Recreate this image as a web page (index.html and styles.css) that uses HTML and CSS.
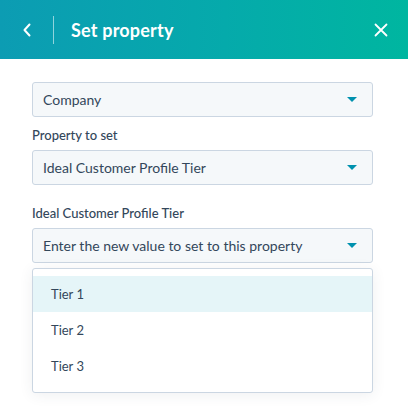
FILE: index.html
```html
<!DOCTYPE html>
<html>
<head>
<meta charset="utf-8">
<link rel="stylesheet" href="styles.css">
</head>
<body>
<div class="panel">
  <header class="header">
    <button class="back" aria-label="Back">
      <svg width="10" height="14" viewBox="0 0 10 14"><path d="M7.5 1.5 L2.5 7 L7.5 12.5" fill="none" stroke="#fff" stroke-width="2" stroke-linecap="round" stroke-linejoin="round"/></svg>
    </button>
    <span class="divider"></span>
    <h1 class="title">Set property</h1>
    <button class="close" aria-label="Close">
      <svg width="14" height="14" viewBox="0 0 14 14"><path d="M1.5 1.5 L12.5 12.5 M12.5 1.5 L1.5 12.5" fill="none" stroke="#fff" stroke-width="1.8" stroke-linecap="round"/></svg>
    </button>
  </header>
  <main class="body">
    <div class="select"><span>Company</span><span class="caret"></span></div>
    <label class="label">Property to set</label>
    <div class="select"><span>Ideal Customer Profile Tier</span><span class="caret"></span></div>
    <label class="label label-gap">Ideal Customer Profile Tier</label>
    <div class="field">
      <div class="select"><span>Enter the new value to set to this property</span><span class="caret"></span></div>
      <ul class="menu">
        <li class="option active">Tier 1</li>
        <li class="option">Tier 2</li>
        <li class="option">Tier 3</li>
      </ul>
    </div>
  </main>
</div>
</body>
</html>
```
FILE: styles.css
```css
* { box-sizing: border-box; }
html, body { margin: 0; padding: 0; }
body {
  width: 408px;
  height: 420px;
  background: #fff;
  font-family: Lato, "Open Sans", sans-serif;
  color: #33475b;
  overflow: hidden;
}
.header {
  height: 59px;
  display: flex;
  align-items: center;
  padding: 0 18px 0 20px;
  background: linear-gradient(to right, #0c9cb3 0%, #05aaab 55%, #00b6a0 100%);
}
.back, .close {
  border: 0;
  background: none;
  padding: 0;
  display: flex;
  align-items: center;
  justify-content: center;
  cursor: pointer;
}
.back { width: 14px; height: 20px; }
.divider {
  width: 1px;
  height: 28px;
  background: rgba(255, 255, 255, 0.55);
  margin: 0 17px 0 19px;
}
.title {
  margin: 0;
  flex: 1;
  font-size: 18px;
  font-weight: 700;
  color: #fff;
  letter-spacing: 0.2px;
}
.close { width: 18px; height: 18px; }
.body {
  padding: 23px 35px 0 32px;
  display: flex;
  flex-direction: column;
}
.select {
  height: 35px;
  display: flex;
  align-items: center;
  justify-content: space-between;
  padding: 0 15px 0 10px;
  background: #f5f8fa;
  border: 1px solid #cbd6e2;
  border-radius: 3px;
  font-size: 14px;
  color: #33475b;
}
.caret {
  width: 0;
  height: 0;
  border-left: 5px solid transparent;
  border-right: 5px solid transparent;
  border-top: 5px solid #0091ae;
}
.label {
  display: block;
  font-size: 13px;
  font-weight: 500;
  margin: 11px 0 7px 0;
  line-height: 15px;
}
.label-gap { margin-top: 21px; }
.field { display: flex; flex-direction: column; }
.menu {
  list-style: none;
  margin: 5px 0 0 0;
  padding: 7px 0 8px 0;
  background: #fff;
  border: 1px solid #cbd6e2;
  border-radius: 3px;
  box-shadow: 0 2px 14px rgba(45, 62, 80, 0.08);
}
.option {
  height: 36px;
  display: flex;
  align-items: center;
  padding-left: 18px;
  font-size: 13px;
}
.option.active { background: #e5f5f8; }
```
